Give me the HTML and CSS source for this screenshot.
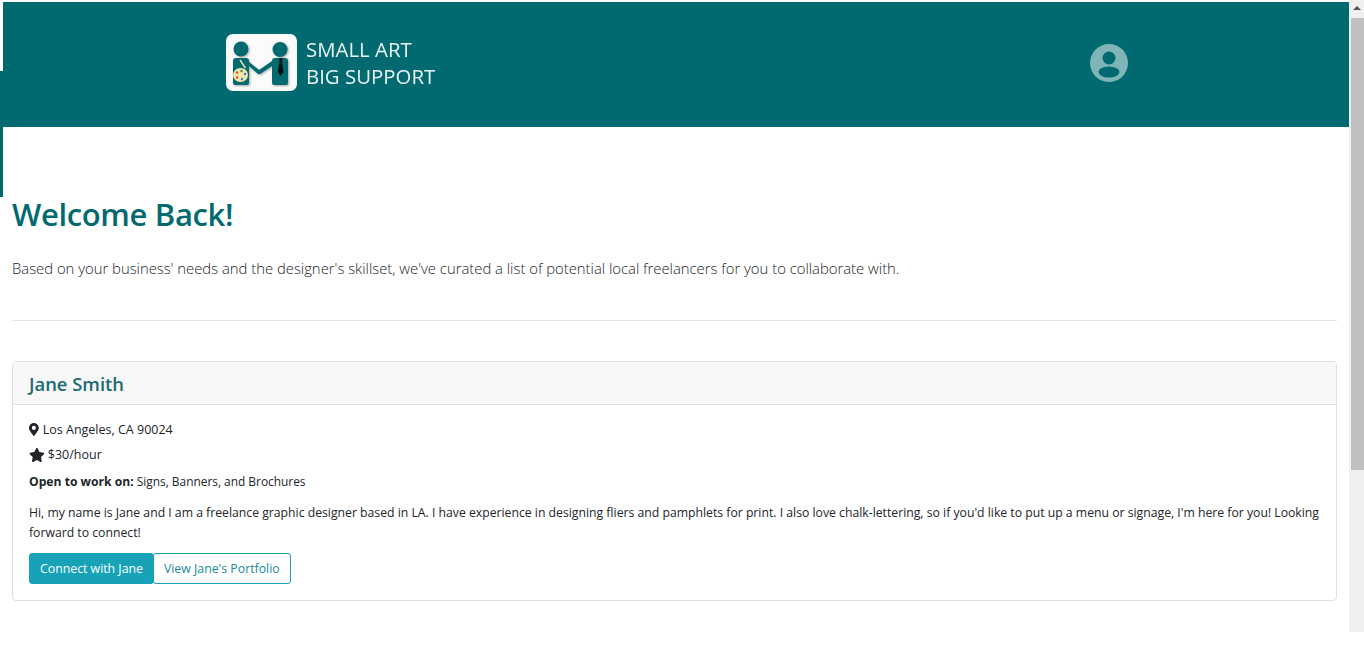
FILE: index.html
```html
<!DOCTYPE html>
<html lang="en">
<head>
  <meta charset="UTF-8" />
  <meta name="viewport" content="width=device-width, initial-scale=1.0"/>
  <title>Small Art Big Support</title>
  <link rel="stylesheet" href="styles.css">
</head>
<body>
  <div class="window">
    <div class="page">
      <header class="site-header">
        <a class="brand" href="#">
          <svg class="brand-logo" viewBox="0 0 71 57" aria-label="Small Art Big Support logo">
            <rect width="71" height="57" rx="7" fill="#fbfbfb"/>
            <g class="logo-figures">
              <circle cx="15" cy="15" r="7.500" fill="#016a70"/>
              <circle cx="54" cy="15.500" r="7.500" fill="#016a70"/>
              <path d="M7 27q0-3 3-3h10q3 0 3 3v1l10 8 13-9q0-3 3-3h10q3 0 3 3v22q0 2-2 2H48q-2 0-2-2V32l-12 8h-2l-9-8v17q0 2-2 2H9q-2 0-2-2z" fill="#016a70"/>
            </g>
            <path d="M53.500 24h3l-.5 3 1.500 11-3 4-2.500-4 1.500-11z" fill="#0a0f12"/>
            <ellipse cx="14.500" cy="41" rx="7.500" ry="7" fill="#efe6a8"/>
            <circle cx="11" cy="38.500" r="1.200" fill="#d9503f"/>
            <circle cx="15.500" cy="37" r="1.200" fill="#3d8f4f"/>
            <circle cx="19" cy="40" r="1.200" fill="#3b78c4"/>
            <circle cx="11" cy="43.500" r="1.200" fill="#d9503f"/>
            <circle cx="16" cy="45" r="1.200" fill="#3b78c4"/>
            <path d="M14 26l5.500 8" stroke="#efe6a8" stroke-width="1.500"/>
          </svg>
          <span class="brand-name">SMALL ART<br>BIG SUPPORT</span>
        </a>
        <a class="account" href="#" aria-label="Account">
          <svg viewBox="0 0 38 38" width="38" height="38">
            <circle cx="19" cy="19" r="19" fill="#80b5b7"/>
            <circle cx="19" cy="14" r="6.500" fill="#016a70"/>
            <ellipse cx="19" cy="28" rx="10.500" ry="5.500" fill="#016a70"/>
          </svg>
        </a>
      </header>
      <span class="edge edge-white"></span>
      <span class="edge edge-teal"></span>

      <main class="content">
        <h1>Welcome Back!</h1>
        <p class="lead">Based on your business' needs and the designer's skillset, we've curated a list of potential local freelancers for you to collaborate with.</p>
        <hr>
        <section class="card">
          <h2 class="card-header">Jane Smith</h2>
          <div class="card-body">
            <p class="meta">
              <svg class="icon-pin" viewBox="0 0 384 512"><path d="M172 502C27 291 0 265 0 192 0 86 86 0 192 0s192 86 192 192c0 73-27 99-172 310-9 14-31 14-40 0zm20-230a80 80 0 1 0 0-160 80 80 0 0 0 0 160z"/></svg>
              Los Angeles, CA 90024
            </p>
            <p class="meta meta-rate">
              <svg class="icon-star" viewBox="0 0 576 512"><path d="M259 18l-65 132-146 21c-26 4-37 36-18 55l106 103-25 146c-5 26 23 46 46 34l131-69 131 69c23 12 51-8 46-34l-25-146 106-103c19-19 8-51-18-55l-146-21-65-132c-12-24-46-24-58 0z"/></svg>
              $30/hour
            </p>
            <p class="skills"><strong>Open to work on:</strong> Signs, Banners, and Brochures</p>
            <p class="bio">Hi, my name is Jane and I am a freelance graphic designer based in LA. I have experience in designing fliers and pamphlets for print. I also love chalk-lettering, so if you'd like to put up a menu or signage, I'm here for you! Looking forward to connect!</p>
            <div class="actions">
              <a class="btn btn-solid" href="#">Connect with Jane</a>
              <a class="btn btn-outline" href="#">View Jane's Portfolio</a>
            </div>
          </div>
        </section>
      </main>
    </div>
    <div class="scrollbar">
      <span class="scroll-arrow"></span>
      <span class="scroll-thumb"></span>
    </div>
  </div>
</body>
</html>
```

FILE: styles.css
```css
html, body {
  margin: 0;
  height: 100%;
  overflow: hidden;
  background-color: #fff;
}

body {
  font-family: "Open Sans", "Noto Sans", sans-serif;
  color: #212529;
}

.window {
  display: flex;
  align-items: flex-start;
  height: 632px;
}

.page {
  position: relative;
  flex: 1;
  min-width: 0;
}

/* header */
.site-header {
  display: flex;
  align-items: center;
  justify-content: space-between;
  height: 125px;
  margin-top: 2px;
  padding: 0 221px 3px 226px;
  box-sizing: border-box;
  background-color: #016a70;
}

.brand {
  display: flex;
  align-items: center;
  gap: 9px;
  color: #fff;
  text-decoration: none;
}

.brand-logo {
  width: 71px;
  height: 57px;
  margin-bottom: 1px;
}

.logo-figures {
  filter: drop-shadow(1.500px 1.500px 1px rgba(0, 0, 0, 0.35));
}

.brand-name {
  font-size: 20.400px;
  line-height: 27px;
  opacity: 0.92;
}

.account {
  display: flex;
}

.edge {
  position: absolute;
  left: 0;
  width: 3px;
}

.edge-white {
  top: 2px;
  height: 69px;
  background-color: #fff;
}

.edge-teal {
  top: 127px;
  height: 70px;
  background-color: #016a70;
}

/* content */
.content {
  padding: 0 12px;
}

h1 {
  margin: 68px 0 0;
  font-size: 31px;
  line-height: 38px;
  letter-spacing: -0.35px;
  font-weight: 600;
  color: #016a70;
}

.lead {
  margin: 23px 0 0;
  font-size: 14.830px;
  line-height: 24px;
  font-weight: 300;
}

hr {
  margin: 40px 0 40px;
  border: 0;
  border-top: 1px solid #e3e3e3;
}

.card {
  border: 1px solid #dfdfdf;
  border-radius: 4px;
  overflow: hidden;
}

.card-header {
  margin: 0;
  padding: 0 16px;
  height: 42px;
  line-height: 44px;
  font-size: 18.400px;
  font-weight: 600;
  color: #1a6b70;
  background-color: #f7f7f7;
  border-bottom: 1px solid #dfdfdf;
}

.card-body {
  padding: 12px 16px 16px;
  font-size: 12.230px;
  line-height: 20px;
}

.card-body p {
  margin: 0;
}

.meta {
  display: flex;
  align-items: center;
  gap: 4px;
  height: 25px;
  font-size: 12.500px;
}

.meta-rate {
  gap: 3px;
}

.card-body .skills {
  margin-top: 2px;
  line-height: 25px;
  font-size: 11.900px;
}

.skills strong {
  font-size: 12.150px;
  font-weight: 700;
}

.icon-pin {
  height: 13px;
  fill: #212529;
}

.icon-star {
  height: 14px;
  fill: #212529;
}

.card-body .bio {
  margin-top: 8.500px;
}

.actions {
  display: flex;
  margin-top: 10.500px;
}

.btn {
  display: block;
  box-sizing: border-box;
  height: 31px;
  line-height: 30px;
  padding: 0 10px;
  font-size: 12.300px;
  border: 1px solid #17a2b8;
  border-radius: 3px;
  text-decoration: none;
}

.btn-solid {
  background-color: #17a2b8;
  color: #fff;
}

.btn-outline {
  margin-left: -1px;
  color: #17899c;
  background-color: #fff;
}

/* scrollbar drawn as in the capture */
.scrollbar {
  display: flex;
  flex-direction: column;
  flex: none;
  width: 15px;
  height: 632px;
  background-color: #f0f0f0;
}

.scroll-arrow {
  height: 18px;
  position: relative;
}

.scroll-arrow::before {
  content: "";
  position: absolute;
  left: 4px;
  top: 6px;
  border-left: 4px solid transparent;
  border-right: 4px solid transparent;
  border-bottom: 4px solid #505050;
}

.scroll-thumb {
  height: 452px;
  background-color: #c0c0c0;
  margin-left: 2px;
}
```
